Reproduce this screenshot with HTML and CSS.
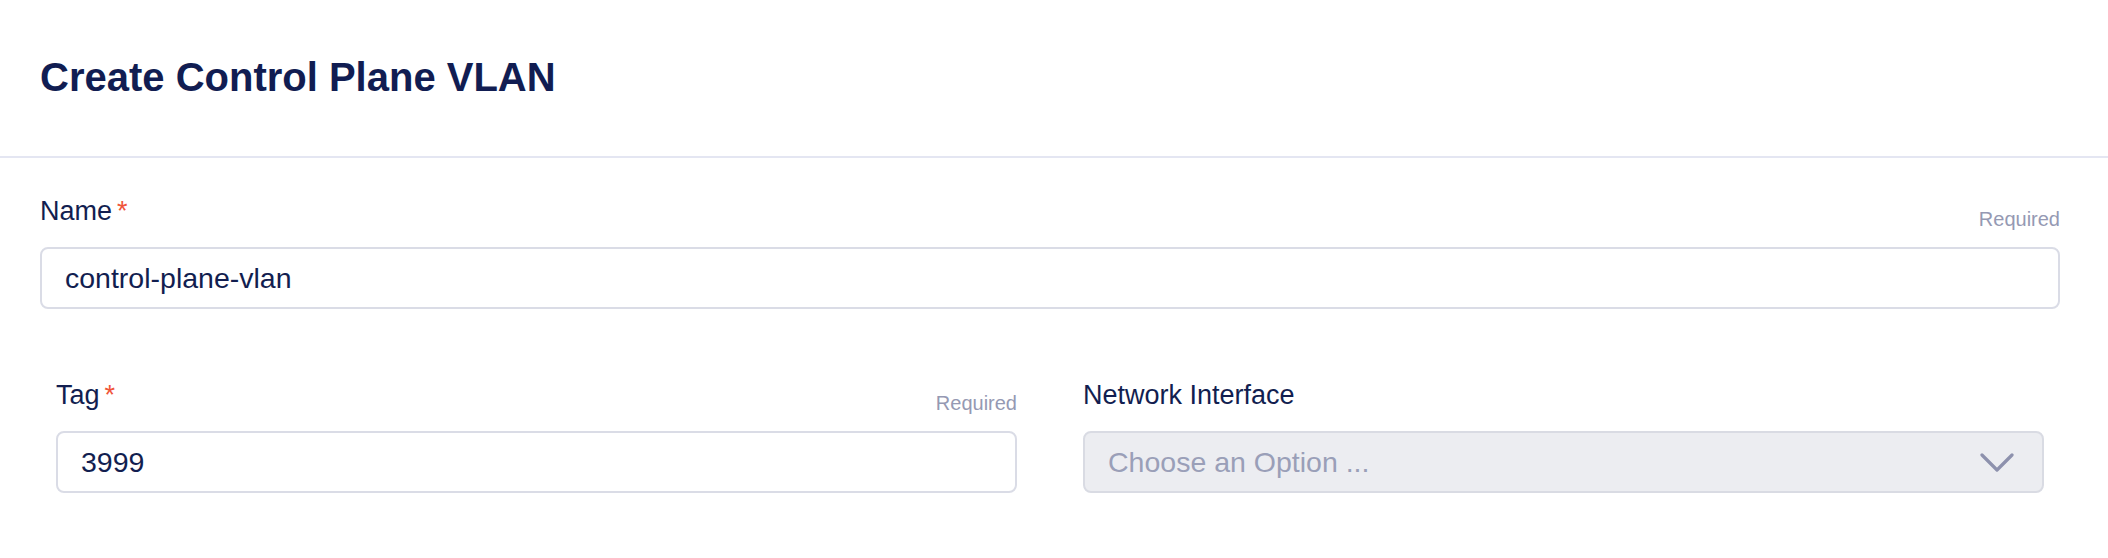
FILE: index.html
```html
<!DOCTYPE html>
<html lang="en">
<head>
<meta charset="utf-8">
<title>Create Control Plane VLAN</title>
<link rel="stylesheet" href="styles.css">
</head>
<body>
<div class="page">
  <header class="header">
    <h1 class="title">Create Control Plane VLAN</h1>
  </header>
  <form class="form">
    <div class="field">
      <div class="label-row">
        <label class="label" for="name">Name<span class="req">*</span></label>
        <span class="hint">Required</span>
      </div>
      <input id="name" class="input" type="text" value="control-plane-vlan">
    </div>
    <div class="row">
      <div class="field">
        <div class="label-row">
          <label class="label" for="tag">Tag<span class="req">*</span></label>
          <span class="hint">Required</span>
        </div>
        <input id="tag" class="input" type="text" value="3999">
      </div>
      <div class="field">
        <div class="label-row">
          <label class="label">Network Interface</label>
        </div>
        <div class="select">
          <span class="placeholder">Choose an Option ...</span>
          <svg class="chevron" width="34" height="19" viewBox="0 0 34 19" aria-hidden="true">
            <polyline points="2,2 17,17 32,2" fill="none" stroke="#8d91ad" stroke-width="3.2" stroke-linecap="round" stroke-linejoin="round"/>
          </svg>
        </div>
      </div>
    </div>
  </form>
</div>
</body>
</html>
```
FILE: styles.css
```css
* {
  box-sizing: border-box;
}

html, body {
  margin: 0;
  padding: 0;
  background: #ffffff;
}

body {
  font-family: "Liberation Sans", Arial, Helvetica, sans-serif;
  color: #121e50;
}

.page {
  width: 2108px;
}

.header {
  padding: 53px 48px 55px 40px;
  border-bottom: 2px solid #e4e6f2;
}

.title {
  margin: 0;
  font-size: 40px;
  line-height: 48px;
  font-weight: 700;
  color: #111d52;
}

.form {
  padding: 37px 48px 0 40px;
}

.field {
  display: flex;
  flex-direction: column;
}

.label-row {
  display: flex;
  justify-content: space-between;
  align-items: flex-end;
  height: 32px;
  margin-bottom: 20px;
}

.label {
  font-size: 27px;
  line-height: 32px;
  color: #121e50;
}

.req {
  color: #f0553a;
  margin-left: 5px;
}

.hint {
  font-size: 20px;
  line-height: 16px;
  color: #9599b3;
}

.input {
  display: block;
  width: 100%;
  height: 62px;
  margin: 0;
  padding: 0 23px;
  border: 2px solid #dadce6;
  border-radius: 8px;
  background: #ffffff;
  font-family: "Liberation Sans", Arial, Helvetica, sans-serif;
  font-size: 28.5px;
  color: #121e50;
  outline: none;
}

.row {
  display: grid;
  grid-template-columns: 1fr 1fr;
  column-gap: 66px;
  padding: 0 16px;
  margin-top: 70px;
}

.select {
  display: flex;
  align-items: center;
  justify-content: space-between;
  height: 62px;
  padding: 0 28px 0 23px;
  border: 2px solid #d9dbe3;
  border-radius: 8px;
  background: #ecedf1;
}

.placeholder {
  font-size: 28.5px;
  color: #9a9fb8;
}

.chevron {
  display: block;
}
```
